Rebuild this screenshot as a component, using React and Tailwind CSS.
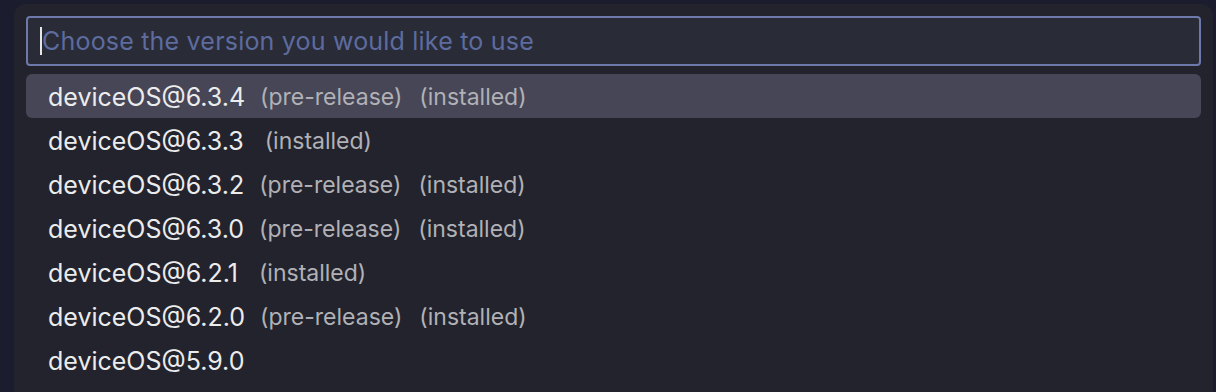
import React from 'react';

const versions = [
  { name: 'deviceOS@6.3.4', desc: ['(pre-release)', '(installed)'], selected: true },
  { name: 'deviceOS@6.3.3', desc: ['(installed)'], wide: true },
  { name: 'deviceOS@6.3.2', desc: ['(pre-release)', '(installed)'] },
  { name: 'deviceOS@6.3.0', desc: ['(pre-release)', '(installed)'] },
  { name: 'deviceOS@6.2.1', desc: ['(installed)'], wide: true },
  { name: 'deviceOS@6.2.0', desc: ['(pre-release)', '(installed)'] },
  { name: 'deviceOS@5.9.0', desc: [] },
];

function App() {
  return (
    <div
      className="w-[1216px] h-[392px] overflow-hidden bg-[#1b1c2d] pl-[14px] pr-[3px] pt-[4px]"
      style={{ fontFamily: 'Inter, "Liberation Sans", sans-serif' }}
    >
      <div className="h-[420px] rounded-t-[12px] bg-[#22232d] px-[12px] pt-[12px]">
        <div className="flex h-[50px] items-center rounded-[4px] border-2 border-[#6c79aa] bg-[#292b37] pl-[12px]">
          <span className="h-[28px] w-[2px] bg-[#e6e6e6]" />
          <span className="pt-[1px] text-[25px] leading-none tracking-[0.2px] text-[#5d6b9f]">
            Choose the version you would like to use
          </span>
        </div>
        <div className="mt-[8px] flex flex-col">
          {versions.map((v) => (
            <div
              key={v.name}
              className={
                'flex h-[44px] items-center rounded-[6px] pl-[22px] ' +
                (v.selected ? 'bg-[#464657]' : '')
              }
            >
              <span className="pt-[3px] text-[25px] leading-none text-[#ececec]">{v.name}</span>
              <span
                className={
                  'flex gap-[17px] pt-[3px] text-[23px] leading-none text-[#b1b1b6] ' +
                  (v.wide ? 'ml-[21px]' : 'ml-[15px]')
                }
              >
                {v.desc.map((d) => (
                  <span key={d}>{d}</span>
                ))}
              </span>
            </div>
          ))}
        </div>
      </div>
    </div>
  );
}

export default App;
